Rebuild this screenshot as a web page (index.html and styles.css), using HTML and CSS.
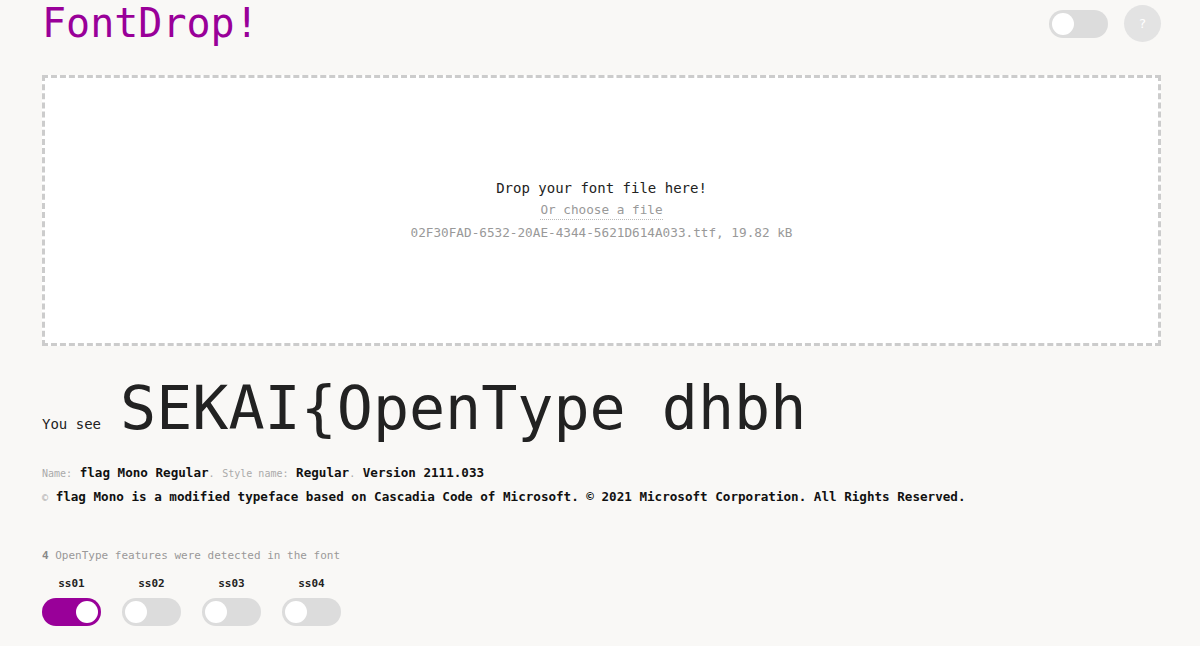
FILE: index.html
```html
<!DOCTYPE html>
<html lang="en">
<head>
<meta charset="utf-8">
<title>FontDrop!</title>
<link rel="stylesheet" href="styles.css">
</head>
<body>
<header class="header">
  <h1 class="logo">FontDrop!</h1>
  <div class="header-tools">
    <span class="toggle toggle-off"><span class="knob"></span></span>
    <span class="help">?</span>
  </div>
</header>
<section class="dropzone">
  <p class="drop-title">Drop your font file here!</p>
  <p class="drop-choose">Or choose a file</p>
  <p class="drop-file">02F30FAD-6532-20AE-4344-5621D614A033.ttf, 19.82 kB</p>
</section>
<section class="preview">
  <span class="you-see">You see</span>
  <span class="sample">SEKAI{OpenType dhbh</span>
</section>
<section class="meta">
  <p class="meta-line"><span class="label">Name:</span> <b>flag Mono Regular</b><span class="label">.</span> <span class="label">Style name:</span> <b>Regular</b><span class="label">.</span> <b>Version 2111.033</b></p>
  <p class="meta-line"><span class="label">©</span> <b>flag Mono is a modified typeface based on Cascadia Code of Microsoft. © 2021 Microsoft Corporation. All Rights Reserved.</b></p>
</section>
<section class="features">
  <p class="features-count"><b>4</b> OpenType features were detected in the font</p>
  <div class="feature-list">
    <div class="feature"><span class="feature-name">ss01</span><span class="toggle toggle-on"><span class="knob"></span></span></div>
    <div class="feature"><span class="feature-name">ss02</span><span class="toggle toggle-off"><span class="knob"></span></span></div>
    <div class="feature"><span class="feature-name">ss03</span><span class="toggle toggle-off"><span class="knob"></span></span></div>
    <div class="feature"><span class="feature-name">ss04</span><span class="toggle toggle-off"><span class="knob"></span></span></div>
  </div>
</section>
</body>
</html>
```

FILE: styles.css
```css
* { box-sizing: border-box; }
html, body { margin: 0; padding: 0; }
body {
  background: #f9f8f6;
  color: #222;
  font-family: "DejaVu Sans Mono", "Liberation Mono", monospace;
  padding: 0 39px 0 42px;
  height: 646px;
  overflow: hidden;
}
p { margin: 0; }
.header {
  display: flex;
  justify-content: space-between;
  align-items: flex-start;
  height: 75px;
}
.logo {
  margin: 0;
  font-weight: normal;
  font-size: 40px;
  line-height: 46px;
  color: #990099;
  letter-spacing: 0;
}
.header-tools {
  display: flex;
  align-items: center;
  gap: 16px;
  padding-top: 5px;
}
.toggle {
  display: flex;
  align-items: center;
  width: 59px;
  height: 28px;
  border-radius: 14px;
  padding: 3px;
}
.toggle-off { background: #dcdcdc; justify-content: flex-start; }
.toggle-on { background: #990099; justify-content: flex-end; }
.knob {
  width: 22px;
  height: 22px;
  border-radius: 50%;
  background: #fff;
}
.help {
  width: 37px;
  height: 37px;
  border-radius: 50%;
  background: #e3e3e3;
  color: #fff;
  font-size: 13px;
  display: flex;
  align-items: center;
  justify-content: center;
}
.dropzone {
  height: 271px;
  border: 3px dashed #cccccc;
  background: #fff;
  display: flex;
  flex-direction: column;
  align-items: center;
  justify-content: center;
}
.drop-title {
  font-size: 14px;
  line-height: 20px;
  color: #222;
  margin-bottom: 3px;
}
.drop-choose {
  font-size: 12.7px;
  line-height: 18px;
  color: #999;
  border-bottom: 1px dotted #bbb;
  margin-bottom: 3px;
}
.drop-file {
  font-size: 12.7px;
  line-height: 20px;
  color: #999;
}
.preview {
  display: flex;
  align-items: baseline;
  gap: 19px;
  margin-top: 22px;
}
.you-see {
  font-size: 14px;
  color: #222;
}
.sample {
  font-size: 60px;
  line-height: 80px;
  color: #222;
}
.meta {
  margin-top: 13px;
}
.meta-line {
  font-size: 12.6px;
  line-height: 23px;
  color: #111;
}
.meta-line b { font-weight: bold; }
.label {
  font-size: 10px;
  color: #aaa;
}
.features {
  margin-top: 40px;
}
.features-count {
  font-size: 11px;
  line-height: 14px;
  color: #999;
}
.features-count b { color: #888; }
.feature-list {
  display: flex;
  gap: 21px;
  margin-top: 14px;
}
.feature {
  display: flex;
  flex-direction: column;
  align-items: center;
  gap: 7px;
}
.feature-name {
  font-size: 11px;
  font-weight: bold;
  line-height: 14px;
  color: #222;
}
```
